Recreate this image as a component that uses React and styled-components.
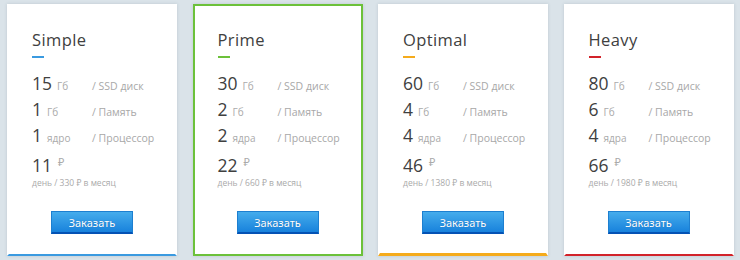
import styled, { createGlobalStyle } from 'styled-components';

const GlobalStyle = createGlobalStyle`
  html, body {
    margin: 0;
    padding: 0;
    background: #dae3e9;
  }
  body {
    font-family: "Open Sans", "Noto Sans", sans-serif;
  }
`;

const Plans = styled.div`
  display: grid;
  grid-template-columns: repeat(4, 170px);
  gap: 15.5px;
  padding: 4px 7px;
  width: 740px;
  height: 260px;
  box-sizing: border-box;
`;

const Card = styled.div`
  height: 252px;
  box-sizing: border-box;
  background: #fff;
  border: 2px solid ${(p) => (p.$featured ? p.$accent : 'transparent')};
  border-bottom: ${(p) => p.$bar}px solid ${(p) => p.$accent};
  box-shadow: 0 0 3px rgba(60, 80, 100, 0.18);
  padding: 24px 0 0 23px;
  display: flex;
  flex-direction: column;
`;

const Title = styled.div`
  font-size: 16.5px;
  line-height: 20px;
  color: #404040;
  letter-spacing: 0.4px;
`;

const Accent = styled.div`
  width: 12px;
  height: 2px;
  margin-top: 6px;
  background: ${(p) => p.$color};
`;

const Specs = styled.div`
  margin-top: 12px;
  display: flex;
  flex-direction: column;
`;

const Row = styled.div`
  display: grid;
  grid-template-columns: 60px auto;
  align-items: baseline;
  height: 26px;
  line-height: 26px;
`;

const Amount = styled.div`
  display: flex;
  align-items: baseline;
  gap: 5px;
`;

const Num = styled.span`
  font-size: 17.5px;
  color: #404040;
`;

const Unit = styled.span`
  font-size: 10px;
  color: #aaa;
`;

const Label = styled.span`
  font-size: 10.5px;
  color: #a8a8a8;
`;

const Price = styled.div`
  margin-top: 8px;
  display: flex;
  align-items: flex-start;
  gap: 6px;
  height: 18px;
  line-height: 18px;

  ${Num} {
    display: block;
    line-height: 18px;
  }
`;

const Rub = styled.span`
  font-size: 11px;
  line-height: 12px;
  color: #aaa;
`;

const PerMonth = styled.div`
  font-size: 8.5px;
  line-height: 12px;
  color: #aaa;
  margin-top: 3px;
`;

const OrderButton = styled.button`
  align-self: center;
  margin: 22px 0 0 -23px;
  width: 82px;
  height: 23px;
  border: 1px solid #1d7fd0;
  border-bottom: 2px solid #0452b4;
  background: linear-gradient(#45acec, #1882dc);
  color: #fff;
  font-family: "Noto Sans", sans-serif;
  font-size: 11px;
  text-shadow: 0 0 1px rgba(0, 40, 100, 0.4);
  padding: 0;
  cursor: pointer;
`;

const plans = [
  { name: 'Simple', color: '#3a9ae0', bar: 2, disk: 15, ram: 1, cpu: 1, core: 'ядро', day: 11, month: 330 },
  { name: 'Prime', color: '#6cc13a', bar: 2, featured: true, disk: 30, ram: 2, cpu: 2, core: 'ядра', day: 22, month: 660 },
  { name: 'Optimal', color: '#f5ab1c', bar: 3, disk: 60, ram: 4, cpu: 4, core: 'ядра', day: 46, month: 1380 },
  { name: 'Heavy', color: '#d2232a', bar: 2, disk: 80, ram: 6, cpu: 4, core: 'ядра', day: 66, month: 1980 },
];

function PlanCard({ plan }) {
  return (
    <Card $accent={plan.color} $featured={plan.featured} $bar={plan.bar}>
      <Title>{plan.name}</Title>
      <Accent $color={plan.color} />
      <Specs>
        <Row>
          <Amount><Num>{plan.disk}</Num><Unit>Гб</Unit></Amount>
          <Label>/ SSD диск</Label>
        </Row>
        <Row>
          <Amount><Num>{plan.ram}</Num><Unit>Гб</Unit></Amount>
          <Label>/ Память</Label>
        </Row>
        <Row>
          <Amount><Num>{plan.cpu}</Num><Unit>{plan.core}</Unit></Amount>
          <Label>/ Процессор</Label>
        </Row>
      </Specs>
      <Price>
        <Num>{plan.day}</Num>
        <Rub>₽</Rub>
      </Price>
      <PerMonth>день / {plan.month} ₽ в месяц</PerMonth>
      <OrderButton>Заказать</OrderButton>
    </Card>
  );
}

export default function App() {
  return (
    <>
      <GlobalStyle />
      <Plans>
        {plans.map((p) => (
          <PlanCard key={p.name} plan={p} />
        ))}
      </Plans>
    </>
  );
}
